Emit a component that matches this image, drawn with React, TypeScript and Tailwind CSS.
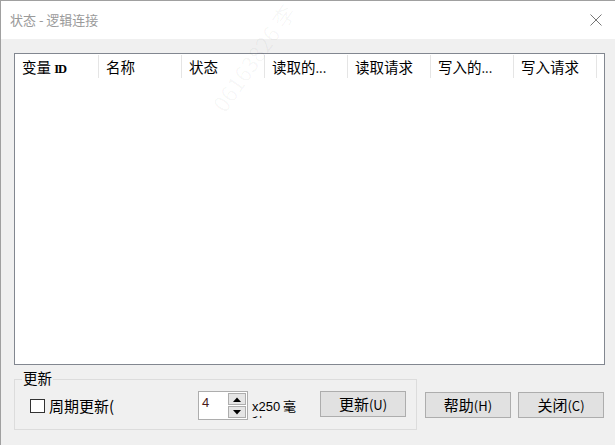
import React from 'react'

const columns = ['变量 ID', '名称', '状态', '读取的...', '读取请求', '写入的...', '写入请求']

function Button({ label, hotkey, className = '' }: { label: string; hotkey: string; className?: string }) {
  return (
    <button
      className={`w-[86px] h-[26px] border border-[#adadad] bg-[#e1e1e1] text-[15px] leading-[24px] text-black ${className}`}
    >
      {label}
      <span className="text-[13px]">({hotkey})</span>
    </button>
  )
}

export default function App() {
  return (
    <div className="relative w-[615px] h-[445px] overflow-hidden bg-[#f0f0f0] border-l border-t border-[#a0a0a0] font-['Noto_Sans_CJK_SC',sans-serif] text-black">
      {/* Title bar */}
      <div className="h-[38px] bg-white flex items-center justify-between pl-[9px] pr-[13px]">
        <span className="text-[13px] leading-[16px] text-[#9a9a9a]">状态 - 逻辑连接</span>
        <svg width="12" height="12" viewBox="0 0 12 12" className="text-[#777]">
          <path d="M0.5 0.5 L11.5 11.5 M11.5 0.5 L0.5 11.5" stroke="currentColor" strokeWidth="1" fill="none" />
        </svg>
      </div>

      {/* Body */}
      <div className="pt-[14px] pl-[13px]">
        {/* List view */}
        <div className="w-[591px] h-[312px] border border-[#828790] bg-white">
          <div className="flex h-[25px] items-center">
            {columns.map((c, i) => (
              <div
                key={c}
                className={`${i === 0 ? 'w-[84px]' : 'w-[83px]'} h-[23px] border-r border-[#e5e5e5] pl-[7px] text-[14.5px] leading-[23px] whitespace-nowrap`}
              >
                {c.endsWith('...') ? (
                  <>
                    {c.slice(0, -3)}
                    <span className="text-[13px]">...</span>
                  </>
                ) : c === '变量 ID' ? (
                  <>
                    变量 <span className="font-['Liberation_Serif',serif] text-[12.5px] font-bold tracking-[-1px]">ID</span>
                  </>
                ) : (
                  c
                )}
              </div>
            ))}
          </div>
        </div>

        {/* Bottom */}
        <div className="flex items-start mt-[14px]">
          <div className="relative w-[403px] h-[51px] border border-[#dcdcdc]">
            <span className="absolute left-[7px] top-[-10px] px-[1px] bg-[#f0f0f0] text-[14.5px] leading-[16px]">
              更新
            </span>
            <div className="flex items-start pl-[15px]">
              <label className="w-[168px] mt-[19px] flex items-center gap-[4px]">
                <span className="w-[15px] h-[14px] shrink-0 border border-[#333] bg-white" />
                <span className="text-[15px] leading-[14px]">周期更新(</span>
              </label>

              <div className="w-[50px] h-[29px] mt-[11px] border border-[#adadad] bg-white flex">
                <span className="flex-1 pl-[3px] text-[13px] leading-[22px] text-[#4a1a1a] font-['Liberation_Sans',sans-serif]">4</span>
                <div className="w-[20px] flex flex-col p-[1px] gap-[1px]">
                  <div className="flex-1 border border-[#adadad] bg-[#e5e5e5] flex items-center justify-center">
                    <svg width="8" height="5" viewBox="0 0 8 5">
                      <path d="M0 5 L4 0.5 L8 5 Z" fill="#000" />
                    </svg>
                  </div>
                  <div className="flex-1 border border-[#adadad] bg-[#e5e5e5] flex items-center justify-center">
                    <svg width="8" height="5" viewBox="0 0 8 5">
                      <path d="M0 0 L4 4.5 L8 0 Z" fill="#000" />
                    </svg>
                  </div>
                </div>
              </div>

              <div className="w-[69px] ml-[3px] mt-[18px] h-[20px] overflow-hidden text-[13px] leading-[15px] pl-[1px]">
                <div>
                  <span className="font-['Liberation_Sans',sans-serif]">x250</span> 毫
                </div>
                <div>秒</div>
              </div>

              <Button label="更新" hotkey="U" className="mt-[11px]" />
            </div>
          </div>

          <Button label="帮助" hotkey="H" className="ml-[8px] mt-[13px]" />
          <Button label="关闭" hotkey="C" className="ml-[7px] mt-[13px]" />
        </div>
      </div>

      {/* Watermark */}
      <div className="absolute left-[190px] top-[40px] -rotate-[55deg] text-[22px] text-black/[0.035] whitespace-nowrap pointer-events-none">
        06163826 李
      </div>
    </div>
  )
}
